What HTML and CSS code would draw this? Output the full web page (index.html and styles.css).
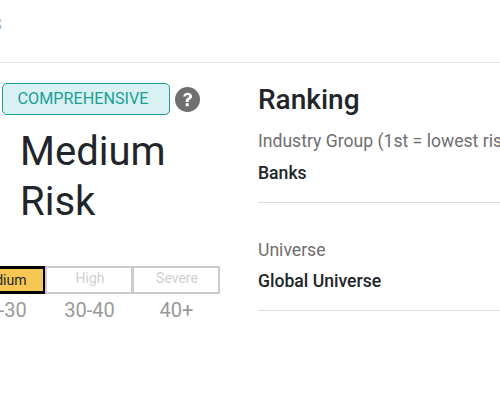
FILE: index.html
```html
<!DOCTYPE html>
<html lang="en">
<head>
<meta charset="utf-8">
<title>Risk Rating</title>
<link rel="stylesheet" href="styles.css">
</head>
<body>
<div class="page">
  <header class="topbar"><span class="cut-label">S</span></header>
  <main class="content">
    <section class="risk">
      <div class="badge-row">
        <span class="badge">COMPREHENSIVE</span>
        <svg class="help" viewBox="0 0 25 25" width="25" height="25" aria-hidden="true">
          <circle cx="12.5" cy="12.5" r="12.5" fill="#6f6f6f"/>
          <path d="M8.2 9.6c.2-2.4 2-3.9 4.5-3.9 2.5 0 4.4 1.5 4.4 3.6 0 1.6-.9 2.5-2.1 3.3-1 .7-1.3 1.1-1.3 2v.3h-3v-.7c0-1.5.6-2.3 1.7-3.1 1-.7 1.5-1.1 1.5-1.8 0-.8-.6-1.3-1.4-1.3-1 0-1.5.6-1.6 1.6z" fill="#fff"/>
          <rect x="10.7" y="16.2" width="3" height="3" fill="#fff"/>
        </svg>
      </div>
      <h2 class="risk-level">Medium<br>Risk</h2>
      <div class="scale">
        <div class="step">
          <div class="cell cell-active"><span class="cell-text">Medium</span></div>
          <div class="range">20-30</div>
        </div>
        <div class="step step-idle">
          <div class="cell">High</div>
          <div class="range">30-40</div>
        </div>
        <div class="step step-idle">
          <div class="cell">Severe</div>
          <div class="range">40+</div>
        </div>
      </div>
    </section>
    <section class="ranking">
      <h2 class="ranking-title">Ranking</h2>
      <div class="rank-item">
        <div class="rank-label">Industry Group (1st = lowest risk)</div>
        <div class="rank-value">Banks</div>
      </div>
      <div class="rank-item rank-item-second">
        <div class="rank-label">Universe</div>
        <div class="rank-value">Global Universe</div>
      </div>
    </section>
  </main>
</div>
</body>
</html>
```
FILE: styles.css
```css
html, body {
  margin: 0;
  padding: 0;
  width: 500px;
  height: 417px;
  overflow: hidden;
  background: #fff;
  font-family: Roboto, "Liberation Sans", sans-serif;
}
.page {
  width: 500px;
  height: 417px;
  overflow: hidden;
}
.topbar {
  height: 62px;
  border-bottom: 1px solid #e2e2e2;
  display: flex;
  align-items: center;
  overflow: hidden;
  position: relative;
}
.cut-label {
  position: absolute;
  left: -8px;
  top: 15px;
  font-size: 16px;
  line-height: 20px;
  color: #999;
}
.content {
  display: flex;
}
.risk {
  width: 258px;
  flex: none;
  padding-top: 20px;
}
.badge-row {
  display: flex;
  align-items: center;
  margin-left: 2px;
  gap: 5px;
}
.badge {
  box-sizing: border-box;
  width: 168px;
  height: 32px;
  border: 1px solid #1a9e96;
  border-radius: 5px;
  background: #d9f1f2;
  color: #1a9e96;
  font-size: 16.2px;
  line-height: 30px;
  text-align: center;
  padding-right: 6px;
}
.help {
  display: block;
  margin-top: 1px;
}
.risk-level {
  margin: 12px 0 0 20px;
  font-size: 40px;
  line-height: 50px;
  font-weight: 400;
  color: #212529;
}
.scale {
  display: flex;
  margin: 39px 0 0 -42px;
}
.step {
  width: 87px;
  flex: none;
  text-align: center;
}
.step-idle .cell,
.step-idle .range {
  padding-left: 2px;
}
.cell {
  box-sizing: border-box;
  height: 28px;
  border: 2px solid #ccc;
  margin-right: -1px;
  font-size: 14px;
  line-height: 20px;
  color: #d0d0d0;
}
.cell-active {
  background: #f6c755;
  border: 3px solid #000;
  color: #212529;
  line-height: 22px;
  padding-right: 2px;
}
.range {
  font-size: 20px;
  line-height: 24px;
  margin-top: 4px;
  color: #999;
}
.ranking {
  flex: 1;
  min-width: 0;
  padding-top: 20px;
}
.ranking-title {
  margin: 0;
  font-size: 28px;
  line-height: 34px;
  font-weight: 500;
  color: #212529;
}
.rank-item {
  padding: 12px 0 17px;
  border-bottom: 1px solid #ddd;
}
.rank-item-second {
  padding-top: 35px;
}
.rank-item-second .rank-value {
  margin-top: 7px;
}
.rank-label {
  font-size: 17.6px;
  line-height: 24px;
  color: #6e6e6e;
  white-space: nowrap;
}
.rank-value {
  font-size: 17.6px;
  line-height: 24px;
  margin-top: 8px;
  font-weight: 500;
  color: #212529;
}
```
